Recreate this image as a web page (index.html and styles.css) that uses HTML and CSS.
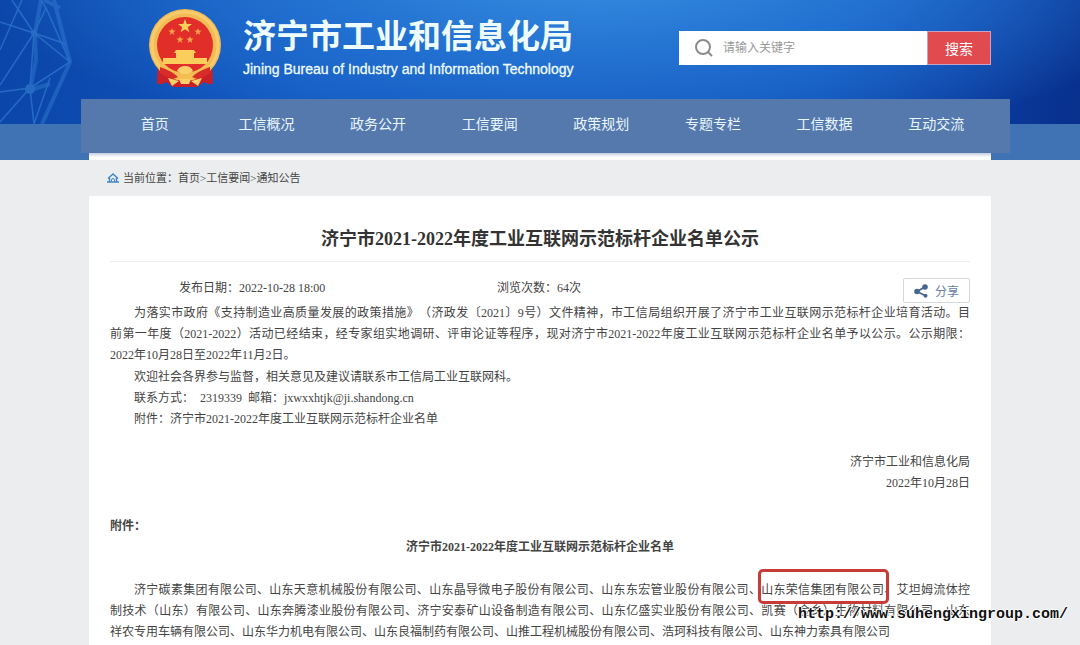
FILE: index.html
```html
<!DOCTYPE html>
<html lang="zh-CN">
<head>
  <meta charset="UTF-8">
  <meta name="viewport" content="width=device-width, initial-scale=1.0">
  <title>济宁市2021-2022年度工业互联网示范标杆企业名单公示</title>
  <link rel="stylesheet" href="styles.css">
</head>
<body>
  <header class="header">
    <svg class="mesh" viewBox="0 0 80 124" fill="none" stroke="#3f8fdc" aria-hidden="true">
      <g stroke-width="1.5">
        <path d="M0 22L34 33M12 0L34 33M34 33L0 85M34 33L70 62M34 33L46 8L41 0M46 8L70 62L30 88M0 92L30 88L0 122M30 88L34 33M30 88L34 124M0 50L22 0M34 33L66 44M50 78L34 124"/>
      </g>
      <g stroke-width="4" opacity=".7">
        <path d="M41 0L35 33L36 60L30 90M54 0L70 62L42 124M30 90L50 84M44 0L60 8"/>
      </g>
      <circle cx="34" cy="33" r="3" fill="#3f8fdc" stroke="none"/>
      <circle cx="30" cy="89" r="5" fill="#3f8fdc" stroke="none"/>
    </svg>
    <div class="wrap">
      <div class="banner">
        <svg class="emblem" viewBox="0 0 74 80" role="img" aria-label="国徽">
          <path d="M10 54L9 74Q12 77 18 73L25 78H49L56 73Q62 77 65 74L64 54Z" fill="#c91f28"/>
          <circle cx="37" cy="36" r="36" fill="#f3bb55"/>
          <circle cx="37" cy="36" r="33" fill="none" stroke="#f8cb6c" stroke-width="3"/>
          <circle cx="37" cy="36" r="28" fill="#e22e28"/>
          <path d="M37 10l1.800 5h5.200l-4.200 3.200 1.600 5-4.400-3-4.400 3 1.600-5-4.200-3.200h5.200z" fill="#fbce5b"/>
          <g fill="#f5a24c">
            <path id="star" d="M24 19l1 2.600h2.700l-2.200 1.600.8 2.700-2.300-1.600-2.300 1.600.8-2.700-2.200-1.600h2.700z"/>
            <use href="#star" x="26"/>
            <use href="#star" x="8" y="8"/>
            <use href="#star" x="18" y="8"/>
          </g>
          <path d="M28 41h18l2 3h-2v5h13v6H15v-6h13v-5h-2z" fill="#fbce5b"/>
          <path d="M11 52Q22 66 37 66Q52 66 63 52L60 63Q50 72 37 71Q24 72 14 63Z" fill="#f6bd50"/>
          <path d="M12 58Q24 62 30 68L25 70Q18 69 12 64ZM62 58Q50 62 44 68L49 70Q56 69 62 64Z" fill="#d92b28"/>
          <path d="M37 57q6 0 8 5l-5 3h-6l-5-3q2-5 8-5zM20 69l11 3-7 5zM54 69l-11 3 7 5zM31 70h12l-2 5h-8z" fill="#fbd06b"/>
        </svg>
        <div class="brand">
          <div class="brand-cn">济宁市工业和信息化局</div>
          <div class="brand-en">Jining Bureau of Industry and Information Technology</div>
        </div>
        <form class="search">
          <svg class="search-icon" viewBox="0 0 18 18" fill="none" stroke="#8c8c8c" stroke-width="2" aria-hidden="true">
            <circle cx="8" cy="8" r="7"/>
            <path d="M13 13l4 4"/>
          </svg>
          <input type="text" name="keyword" placeholder="请输入关键字" aria-label="请输入关键字">
          <button type="submit">搜索</button>
        </form>
      </div>
      <nav class="nav">
        <a href="#">首页</a>
        <a href="#">工信概况</a>
        <a href="#">政务公开</a>
        <a href="#">工信要闻</a>
        <a href="#">政策规划</a>
        <a href="#">专题专栏</a>
        <a href="#">工信数据</a>
        <a href="#">互动交流</a>
      </nav>
      <div class="strip"></div>
    </div>
  </header>

  <main class="wrap">
    <div class="crumbs">
      <svg class="home-icon" viewBox="0 0 12 10" fill="none" stroke="#3f84c4" aria-hidden="true">
        <path d="M1 5.500L6 1L11 5.500M2.500 5V9M9.500 5V9M0 9H12" stroke-width="1.400"/>
        <path d="M4.500 8.500V7a1.500 1.500 0 0 1 3 0V8.500" stroke-width="1"/>
      </svg>
      <span>当前位置：</span><a href="#">首页</a>&gt;<a href="#">工信要闻</a>&gt;<a href="#">通知公告</a>
    </div>

    <article class="article">
      <h1>济宁市2021-2022年度工业互联网示范标杆企业名单公示</h1>
      <div class="meta">
        <span class="date">发布日期：2022-10-28 18:00</span>
        <span class="views">浏览次数：64次</span>
        <button type="button" class="share">
          <svg viewBox="0 0 14 14" aria-hidden="true">
            <path d="M11 3L3 7.500L11 11.500" fill="none" stroke="#46678f" stroke-width="1.800"/>
            <circle cx="11" cy="3" r="2.800" fill="#46678f"/>
            <circle cx="3" cy="7.500" r="2.800" fill="#46678f"/>
            <circle cx="11.500" cy="11.800" r="2" fill="#46678f"/>
          </svg>
          分享
        </button>
      </div>

      <p class="intro">
        <span class="row indent">为落实市政府《支持制造业高质量发展的政策措施》（济政发〔2021〕9号）文件精神，市工信局组织开展了济宁市工业互联网示范标杆企业培育活动。目</span>
        <span class="row">前第一年度（2021-2022）活动已经结束，经专家组实地调研、评审论证等程序，现对济宁市2021-2022年度工业互联网示范标杆企业名单予以公示。公示期限：</span>
        2022年10月28日至2022年11月2日。
      </p>
      <p class="indent">欢迎社会各界参与监督，相关意见及建议请联系市工信局工业互联网科。</p>
      <p class="indent">联系方式：&nbsp; 2319339 &nbsp;邮箱：jxwxxhtjk@ji.shandong.cn</p>
      <p class="indent">附件：济宁市2021-2022年度工业互联网示范标杆企业名单</p>

      <div class="sign">
        <p>济宁市工业和信息化局</p>
        <p>2022年10月28日</p>
      </div>

      <p class="attach">附件：</p>
      <h2>济宁市2021-2022年度工业互联网示范标杆企业名单</h2>
      <p class="list">
        <span class="row indent">济宁碳素集团有限公司、山东天意机械股份有限公司、山东晶导微电子股份有限公司、山东东宏管业股份有限公司、<span class="mark">山东荣信集团有限公司</span>、艾坦姆流体控</span>
        <span class="row">制技术（山东）有限公司、山东奔腾漆业股份有限公司、济宁安泰矿山设备制造有限公司、山东亿盛实业股份有限公司、凯赛（金乡）生物材料有限公司、山东</span>
        祥农专用车辆有限公司、山东华力机电有限公司、山东良福制药有限公司、山推工程机械股份有限公司、浩珂科技有限公司、山东神力索具有限公司
      </p>
    </article>
  </main>
  <div class="watermark">http://www.suhengxingroup.com/</div>
</body>
</html>
```

FILE: styles.css
```css
* { box-sizing: border-box; }

body {
  position: relative;
  margin: 0;
  background: #ebedee;
  color: #444;
  font: 12px/21px "Liberation Serif", "Noto Sans CJK SC", serif;
  text-spacing-trim: space-all;
}
h1, h2, p { margin: 0; }
a { color: inherit; text-decoration: none; }
button, input { font-family: inherit; }

.wrap { width: 902px; max-width: 100%; margin: 0 auto; }

/* header */
.header {
  position: relative;
  background:
    linear-gradient(#4073b3, #4073b3) bottom / 100% 36px no-repeat,
    radial-gradient(ellipse 620px 200px at 590px -40px, #3a92e0, #2474d3 45%, rgba(22, 88, 196, 0) 100%),
    linear-gradient(100deg, #0b45a8, #1156c0 30%, #0f4fb8 75%, #082f8c);
}
.mesh {
  position: absolute;
  top: 0;
  left: 0;
  width: 80px;
  height: 124px;
  opacity: .5;
}
.banner {
  position: relative;
  display: flex;
  align-items: flex-start;
  height: 99px;
  padding-left: 59px;
}
.emblem { width: 74px; height: 80px; margin-top: 9px; }
.brand { margin: 14px 0 0 21px; color: #effcff; white-space: nowrap; }
.brand-cn { font: bold 33px/40px "Noto Sans CJK SC", sans-serif; }
.brand-en { font: 14px/30px "Liberation Sans", sans-serif; -webkit-text-stroke: 0.3px; }

.search {
  display: flex;
  align-items: center;
  width: 312px;
  height: 34px;
  margin: 31px 0 0 auto;
  padding-left: 16px;
  background: #fff;
}
.search-icon { width: 18px; height: 18px; }
.search input {
  flex: 1;
  min-width: 0;
  padding: 0 0 0 10px;
  border: 0;
  outline: 0;
  background: none;
  font-size: 12px;
}
.search input::placeholder { color: #999; }
.search button {
  width: 64px;
  height: 34px;
  padding: 0;
  border: 1px solid #c5a3c9;
  background: #e14b50;
  color: #fff;
  font-size: 14px;
}

.nav {
  position: relative;
  display: flex;
  height: 54px;
  margin: 0 -19px 0 -8px;
  padding: 0 18px;
  background: #5679ad;
  color: #e8f6ff;
  font-size: 14px;
  line-height: 51px;
  text-align: center;
}
.nav a { flex: 1; }
.strip {
  height: 7px;
  background: linear-gradient(#c3cddd, #fff 60%);
}

/* breadcrumb */
.crumbs {
  display: flex;
  align-items: center;
  height: 36px;
  padding-left: 18px;
  font-size: 11px;
}
.home-icon { width: 12px; height: 10px; margin-right: 4px; }

/* article */
.article {
  min-height: 449px;
  padding: 22px 21px 0;
  background: #fff;
}
h1 {
  margin: 0 0 16px;
  padding-bottom: 1px;
  border-bottom: 1px solid #eee;
  color: #333;
  font-size: 18px;
  line-height: 42px;
  text-align: center;
}
.meta { display: flex; height: 25px; line-height: 20px; }
.date { width: 318px; margin-left: 69px; }
.share {
  display: flex;
  align-items: center;
  justify-content: space-between;
  width: 67px;
  height: 25px;
  margin: 0 0 0 auto;
  padding: 0 10px;
  border: 1px solid #d5d8dc;
  border-radius: 2px;
  background: #fff;
  color: #6580a5;
  font-size: 12px;
}
.share svg { width: 14px; height: 14px; }

.indent { text-indent: 2em; }
.intro { margin-bottom: 1px; }
.row {
  display: block;
  text-align: justify;
  text-align-last: justify;
}
.sign { margin: 22px 0; text-align: right; }
h2 { font-size: 12px; line-height: 21px; text-align: center; }
.attach { font-weight: bold; }
.list { margin-top: 22px; }

/* red frame round the highlighted company */
.mark {
  position: relative;
  text-indent: 0;
}
.mark::after {
  content: "";
  position: absolute;
  inset: -14px -5px -7px -3px;
  border: 3px solid #c73c38;
  border-radius: 5px;
}

.watermark {
  position: absolute;
  right: 12px;
  bottom: 20px;
  color: #111;
  font: bold 15px/20px "Liberation Mono", monospace;
  text-shadow: 1px 0 #fff, -1px 0 #fff, 0 1px #fff, 0 -1px #fff;
}
```
